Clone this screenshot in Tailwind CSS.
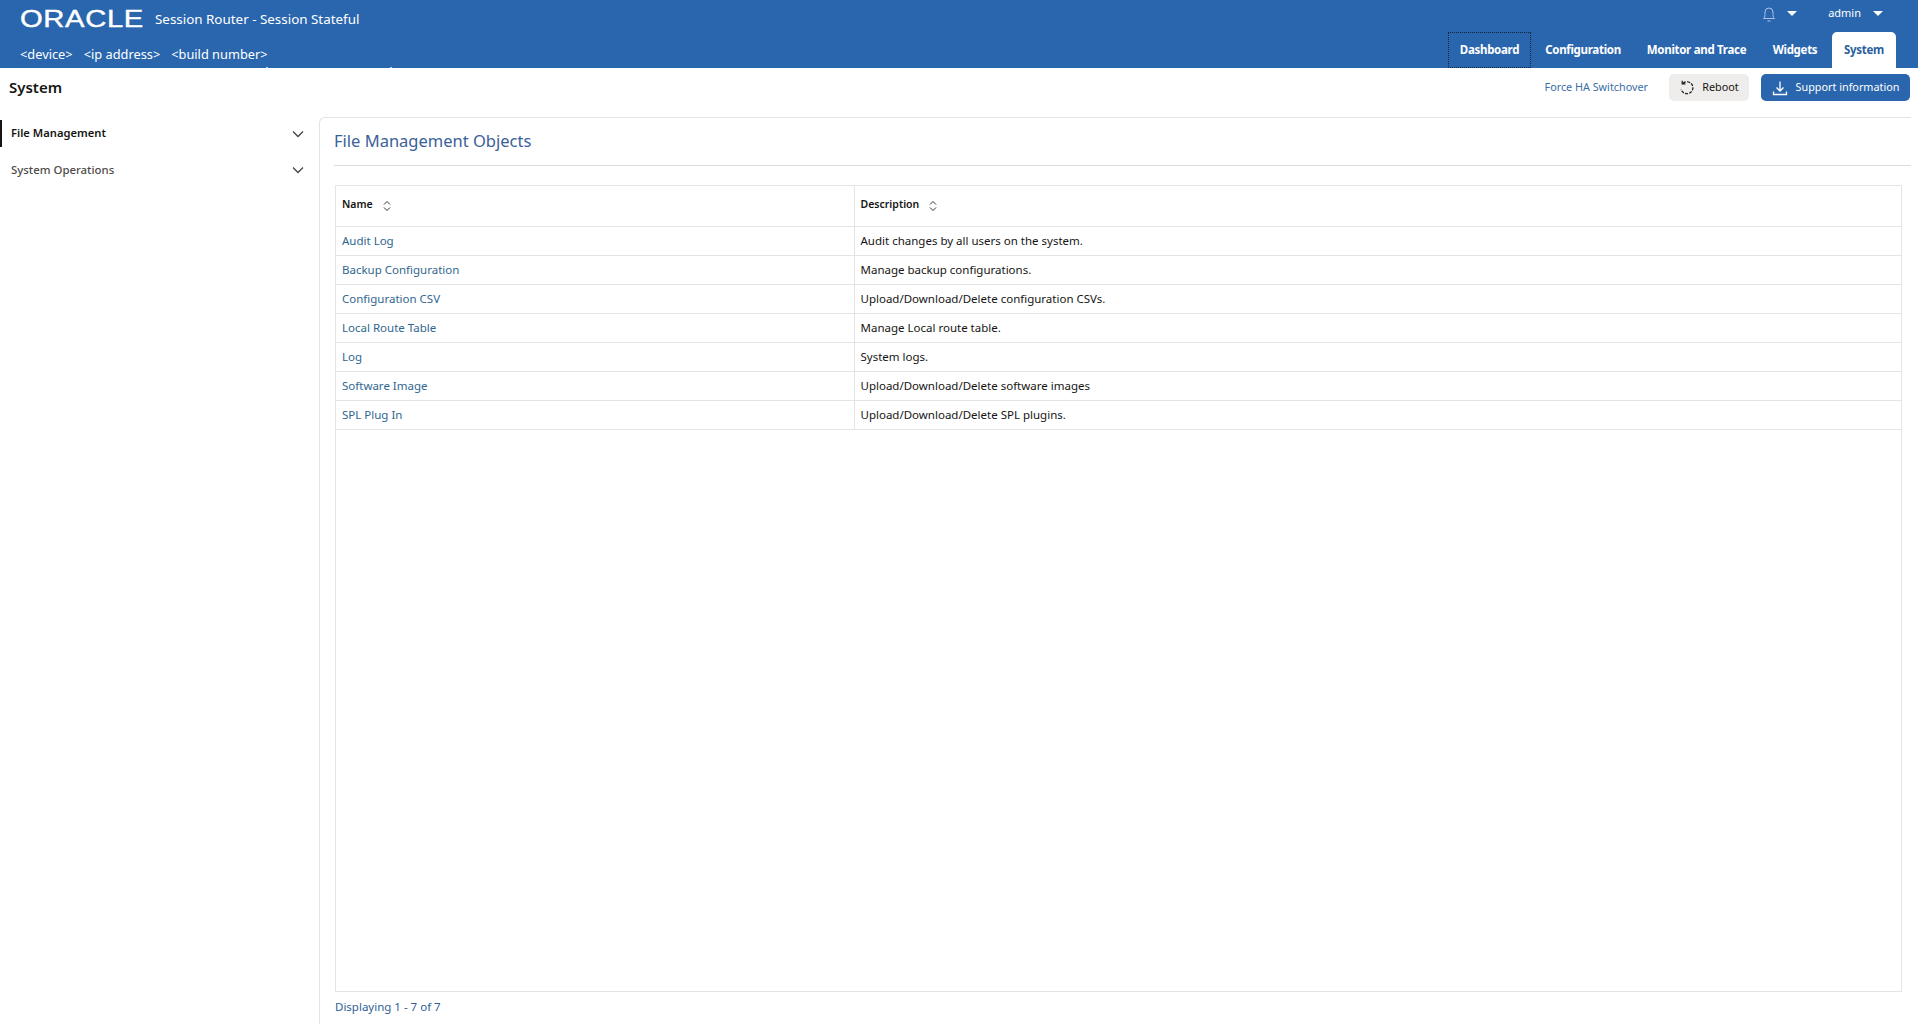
<!DOCTYPE html>
<html lang="en">
<head>
  <meta charset="UTF-8">
  <title>Session Router - System</title>
  <script src="https://cdn.jsdelivr.net/npm/@tailwindcss/browser@4"></script>
</head>
<body class="bg-white h-[1024px] overflow-hidden flex flex-col font-['Noto_Sans',sans-serif] text-[11.5px] text-[#161513]">
  <!-- header -->
  <header class="relative h-[68px] bg-[#2a66ae] text-white flex justify-between shrink-0">
    <div class="pl-5 pt-[5px]">
      <div class="flex items-center h-[28px]">
        <span class="w-[123px] block font-['Liberation_Sans',sans-serif] text-[23px] leading-none tracking-[0.5px] origin-left scale-x-[1.27] whitespace-nowrap [-webkit-text-stroke:0.4px_white]">ORACLE</span>
        <span class="ml-[12px] text-[13.4px]">Session Router - Session Stateful</span>
      </div>
      <div class="flex gap-[11px] mt-[13px] text-[12.8px] leading-[16px]">
        <span>&lt;device&gt;</span>
        <span>&lt;ip address&gt;</span>
        <span>&lt;build number&gt;</span>
      </div>
    </div>
    <!-- clipped specks at the bottom of the info row -->
    <span class="absolute left-[266px] bottom-0 w-[2px] h-[1px] bg-white/70"></span>
    <span class="absolute left-[390px] bottom-0 w-[2px] h-[1px] bg-white/70"></span>
    <div class="flex flex-col items-end pr-[22px]">
      <div class="flex items-center h-[32px] pb-[5px] mr-[13px]">
        <svg class="w-[14px] h-[16px] text-[#a9c3e2]" viewBox="0 0 14 16" fill="none" stroke="currentColor" stroke-width="1"><path d="M1.500 12.500c1.200-1 1.500-2 1.500-4V6a4 4 0 0 1 8 0v2.500c0 2 .3 3 1.500 4z"/><path d="M5.500 15h3"/></svg>
        <span class="ml-[11px] w-0 h-0 border-x-[5px] border-x-transparent border-t-[5px] border-t-white"></span>
        <span class="ml-[31px] text-[11px]">admin</span>
        <span class="ml-[12px] w-0 h-0 border-x-[5px] border-x-transparent border-t-[5px] border-t-white"></span>
      </div>
      <nav class="flex h-[36px] font-bold text-[11.5px] tracking-[-0.3px] whitespace-nowrap">
        <a class="w-[83px] flex items-center justify-center border border-dotted border-[#10243c]">Dashboard</a>
        <a class="ml-[15px] w-[74px] flex items-center justify-center">Configuration</a>
        <a class="ml-[27px] w-[99px] flex items-center justify-center">Monitor and Trace</a>
        <a class="ml-[27px] w-[44px] flex items-center justify-center">Widgets</a>
        <a class="ml-[15px] w-[64px] flex items-center justify-center bg-white text-[#2a5f9e] rounded-t-[5px]">System</a>
      </nav>
    </div>
  </header>

  <!-- page title bar -->
  <div class="h-[49px] pb-[10px] flex items-center justify-between pl-[9px] pr-[8px] shrink-0">
    <h1 class="text-[15px] font-semibold">System</h1>
    <div class="flex items-center">
      <a class="text-[10.8px] text-[#3a6ea5] mr-[1px]">Force HA Switchover</a>
      <button class="ml-[20px] w-[80px] h-[27px] bg-[#efedeb] rounded-[5px] flex items-center justify-center gap-[7px] text-[10.8px]">
        <svg class="w-[16px] h-[16px]" viewBox="0 0 16 16" fill="none" stroke="#161513" stroke-width="1.200"><path d="M4 3.200A6 6 0 1 1 2.100 9.200" stroke-dasharray="3 1.300"/><path d="M3.200 .8v3h3.200"/></svg>
        Reboot
      </button>
      <button class="ml-[12px] w-[149px] h-[27px] bg-[#2a66ae] text-white rounded-[5px] flex items-center justify-center gap-[8px] text-[10.8px]">
        <svg class="w-[16px] h-[16px]" viewBox="0 0 16 16" fill="none" stroke="currentColor" stroke-width="1.300"><path d="M8 1.500v9M4.500 7.500 8 11l3.500-3.500M1.500 11.500v3h13v-3"/></svg>
        Support information
      </button>
    </div>
  </div>

  <div class="flex flex-1 min-h-0">
    <!-- side nav -->
    <aside class="w-[319px] shrink-0">
      <div class="h-[27px] mt-[3px] flex items-center justify-between border-l-2 border-[#161513] pl-[9px] pr-[15px] font-semibold text-[11.2px]">
        File Management
        <svg class="w-[12px] h-[8px] mt-[1px]" viewBox="0 0 12 8" fill="none" stroke="#444" stroke-width="1.300"><path d="m1 1.500 5 5 5-5"/></svg>
      </div>
      <div class="h-[27px] mt-[9px] flex items-center justify-between pl-[11px] pr-[15px] text-[#4f4c49] font-medium text-[11.4px]">
        System Operations
        <svg class="w-[12px] h-[8px] mt-[1px]" viewBox="0 0 12 8" fill="none" stroke="#444" stroke-width="1.300"><path d="m1 1.500 5 5 5-5"/></svg>
      </div>
    </aside>

    <!-- content panel -->
    <main class="flex-1 mr-[7px] border-l border-t border-[#e4e4e4] rounded-tl-[6px] pl-[15px] flex flex-col min-w-0">
      <h2 class="h-[48px] flex items-center text-[16.5px] text-[#3a6198] border-b border-[#dedede] -ml-[1px] pl-[0px]">File Management Objects</h2>
      <div class="mt-[19px] w-[1567px] h-[807px] border border-[#e4e4e4]">
        <table class="w-full table-fixed border-collapse">
          <thead>
            <tr class="h-[40px] border-b border-[#e4e4e4] text-[10.5px]">
              <th class="w-[518px] border-r border-[#e4e4e4] pl-[6px] pb-[2px] text-left font-semibold">
                <span class="inline-flex items-center gap-[10px]">Name
                  <svg class="w-[8px] h-[10px] mt-[2px]" viewBox="0 0 8 10" fill="none" stroke="#333" stroke-width="1"><path d="m1 3.500 3-3 3 3M1 6.500l3 3 3-3"/></svg>
                </span>
              </th>
              <th class="pl-[6px] pb-[2px] text-left font-semibold">
                <span class="inline-flex items-center gap-[10px]">Description
                  <svg class="w-[8px] h-[10px] mt-[2px]" viewBox="0 0 8 10" fill="none" stroke="#333" stroke-width="1"><path d="m1 3.500 3-3 3 3M1 6.500l3 3 3-3"/></svg>
                </span>
              </th>
            </tr>
          </thead>
          <tbody>
            <tr class="h-[29px] border-b border-[#e4e4e4]"><td class="border-r border-[#e4e4e4] pl-[6px] text-[#2f6690]">Audit Log</td><td class="pl-[6px]">Audit changes by all users on the system.</td></tr>
            <tr class="h-[29px] border-b border-[#e4e4e4]"><td class="border-r border-[#e4e4e4] pl-[6px] text-[#2f6690]">Backup Configuration</td><td class="pl-[6px]">Manage backup configurations.</td></tr>
            <tr class="h-[29px] border-b border-[#e4e4e4]"><td class="border-r border-[#e4e4e4] pl-[6px] text-[#2f6690]">Configuration CSV</td><td class="pl-[6px]">Upload/Download/Delete configuration CSVs.</td></tr>
            <tr class="h-[29px] border-b border-[#e4e4e4]"><td class="border-r border-[#e4e4e4] pl-[6px] text-[#2f6690]">Local Route Table</td><td class="pl-[6px]">Manage Local route table.</td></tr>
            <tr class="h-[29px] border-b border-[#e4e4e4]"><td class="border-r border-[#e4e4e4] pl-[6px] text-[#2f6690]">Log</td><td class="pl-[6px]">System logs.</td></tr>
            <tr class="h-[29px] border-b border-[#e4e4e4]"><td class="border-r border-[#e4e4e4] pl-[6px] text-[#2f6690]">Software Image</td><td class="pl-[6px]">Upload/Download/Delete software images</td></tr>
            <tr class="h-[29px] border-b border-[#e4e4e4]"><td class="border-r border-[#e4e4e4] pl-[6px] text-[#2f6690]">SPL Plug In</td><td class="pl-[6px]">Upload/Download/Delete SPL plugins.</td></tr>
          </tbody>
        </table>
      </div>
      <div class="mt-[6px] text-[11.5px] text-[#2f5f95]">Displaying 1 - 7 of 7</div>
    </main>
  </div>
</body>
</html>
